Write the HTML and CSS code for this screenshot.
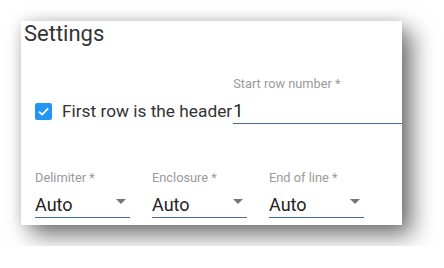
FILE: index.html
```html
<!DOCTYPE html>
<html>
<head>
<meta charset="utf-8">
<link rel="stylesheet" href="styles.css">
</head>
<body>
<div class="card">
  <div class="title">Settings</div>
  <div class="row1">
    <div class="check">
      <span class="box">
        <svg width="17" height="17" viewBox="0 0 17 17"><path d="M4 8.6 L7.1 11.6 L13.2 5.4" fill="none" stroke="#fff" stroke-width="1.8"/></svg>
      </span>
      <span class="check-label">First row is the header</span>
    </div>
    <div class="field grow">
      <div class="label">Start row number *</div>
      <div class="value">1</div>
    </div>
  </div>
  <div class="row2">
    <div class="field select">
      <div class="label">Delimiter *</div>
      <div class="value"><span>Auto</span><span class="arrow"></span></div>
    </div>
    <div class="field select">
      <div class="label">Enclosure *</div>
      <div class="value"><span>Auto</span><span class="arrow"></span></div>
    </div>
    <div class="field select">
      <div class="label">End of line *</div>
      <div class="value"><span>Auto</span><span class="arrow"></span></div>
    </div>
  </div>
</div>
</body>
</html>
```
FILE: styles.css
```css
html, body {
  margin: 0;
  padding: 0;
  background: #fff;
}
body {
  padding: 21px;
  font-family: Roboto, "Liberation Sans", sans-serif;
}
.card {
  width: 381px;
  height: 204px;
  box-sizing: border-box;
  background: #fff;
  overflow: hidden;
  padding-left: 14px;
  box-shadow: 10px 10px 22px rgba(0, 0, 0, 0.55), 0 0 12px rgba(0, 0, 0, 0.12);
}
.title {
  font-size: 22px;
  line-height: 26px;
  color: #333;
  margin-left: -11px;
}
.row1 {
  display: flex;
  align-items: flex-end;
  margin-top: 29px;
}
.check {
  display: flex;
  align-items: center;
  margin-bottom: 3px;
}
.box {
  width: 17px;
  height: 17px;
  background: #2196f3;
  border-radius: 2px;
  display: block;
}
.box svg {
  display: block;
}
.check-label {
  margin-left: 10px;
  font-size: 17.3px;
  line-height: 20px;
  color: #333;
  white-space: nowrap;
}
.field {
  display: flex;
  flex-direction: column;
}
.grow {
  flex: 1;
  margin-left: 1px;
}
.label {
  font-size: 12.8px;
  line-height: 15px;
  color: #9a9a9a;
  white-space: nowrap;
}
.value {
  margin-top: 10px;
  font-size: 18px;
  line-height: 20px;
  color: #222;
  padding-bottom: 2px;
  border-bottom: 1px solid #3f6cae;
}
.row2 {
  display: flex;
  gap: 22px;
  margin-top: 46px;
}
.select {
  width: 95px;
}
.select .value {
  display: flex;
  justify-content: space-between;
  align-items: flex-start;
}
.arrow {
  width: 0;
  height: 0;
  border-left: 5px solid transparent;
  border-right: 5px solid transparent;
  border-top: 5px solid #757575;
  margin-top: 4px;
  margin-right: 4px;
}
```
